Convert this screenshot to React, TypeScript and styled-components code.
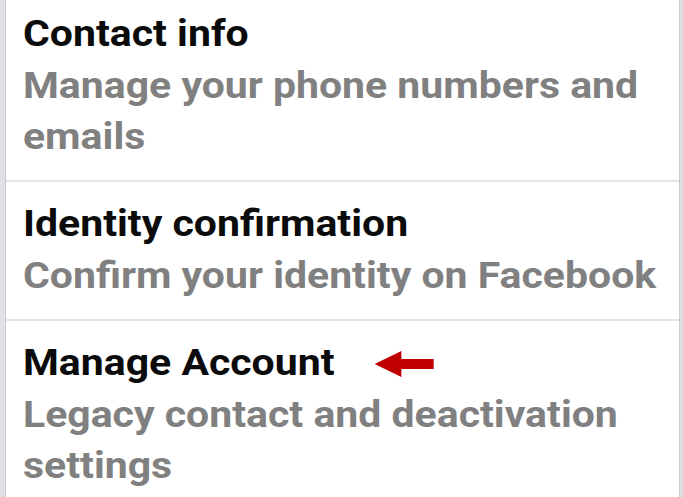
import React from 'react'
import styled, { createGlobalStyle } from 'styled-components'

interface Setting {
    title: string;
    description: string;
    marked?: boolean;
}

const settings: Setting[] = [
    { title: 'Contact info', description: 'Manage your phone numbers and emails' },
    { title: 'Identity confirmation', description: 'Confirm your identity on Facebook' },
    { title: 'Manage Account', description: 'Legacy contact and deactivation settings', marked: true },
]

const GlobalStyle = createGlobalStyle`
    html, body {
        margin:0;
        padding:0;
        background:#dfe1e5;
        overflow:hidden;
    }
    body {
        font-family:Roboto, "Liberation Sans", sans-serif;
    }
`

const Screen = styled.div`
    width:683px;
    height:497px;
    overflow:hidden;
    display:flex;
    background:#dfe1e5;
`

const Card = styled.div`
    flex:1;
    margin:0 3px 0 5px;
    background:#fff;
    border-left:1px solid #c9ccd1;
    border-right:1px solid #c9ccd1;
    display:flex;
    flex-direction:column;
`

const List = styled.div`
    margin-top:-8px;
    display:flex;
    flex-direction:column;
`

const Row = styled.div`
    padding:16px 17px 17px 17px;
    border-bottom:2px solid #e2e4e7;
`

/* the source screenshot is stretched sideways, so the text block is too */
const Content = styled.div`
    display:flex;
    flex-direction:column;
    gap:1px;
    transform:scaleX(1.138);
    transform-origin:left center;
`

const TitleLine = styled.div`
    display:flex;
    align-items:center;
    gap:35px;
`

const Title = styled.div`
    font-size:36px;
    line-height:52px;
    font-weight:700;
    color:#0b0b0b;
    white-space:nowrap;
`

const Description = styled.div`
    font-size:36px;
    line-height:51px;
    font-weight:700;
    color:#808080;
    width:560px;
`

const ArrowIcon = styled.svg`
    flex:none;
    margin-top:2px;
`

const Arrow = () => (
    <ArrowIcon width="52" height="26" viewBox="0 0 52 26">
        <polygon points="0,13 23.5,0 23.5,8 52,8 52,18 23.5,18 23.5,26" fill="#c00000" />
    </ArrowIcon>
)

const SettingRow: React.FunctionComponent<{ item: Setting }> = ({ item }) => (
    <Row>
        <Content>
            <TitleLine>
                <Title>{item.title}</Title>
                {item.marked && <Arrow />}
            </TitleLine>
            <Description>{item.description}</Description>
        </Content>
    </Row>
)

const App = () => {
    return (
        <>
            <GlobalStyle />
            <Screen>
                <Card>
                    <List>
                        {settings.map((s) => (
                            <SettingRow key={s.title} item={s} />
                        ))}
                    </List>
                </Card>
            </Screen>
        </>
    )
}

export default App
